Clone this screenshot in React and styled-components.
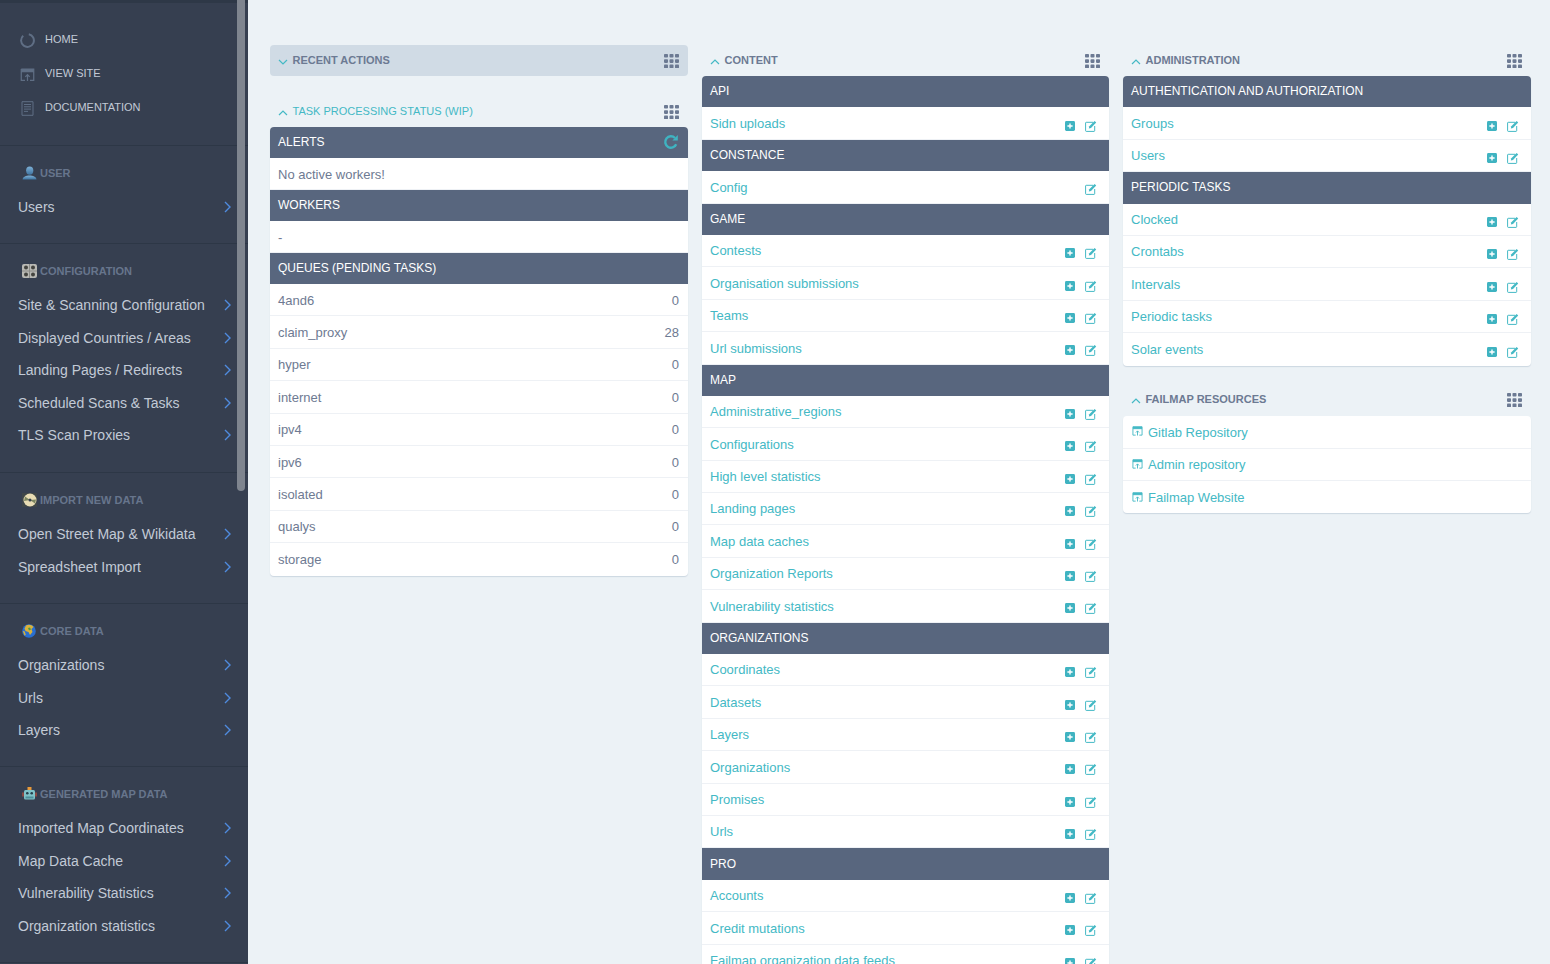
import React from "react";
import styled, { createGlobalStyle } from "styled-components";

const Global = createGlobalStyle`
  html, body { margin: 0; height: 100%; overflow: hidden; background: #ecf2f6; }
  body { font-family: "Liberation Sans", Arial, sans-serif; -webkit-font-smoothing: antialiased; }
  * { box-sizing: border-box; }
`;

const Page = styled.div`
  display: flex;
  height: 964px;
  overflow: hidden;
  background: #ecf2f6;
`;
const Sidebar = styled.aside`
  position: relative;
  flex: 0 0 248px;
  padding-top: 3px;
  background: #363f50;
  box-shadow: inset 0 3px 0 #2e3847;
  overflow: hidden;
`;
const ScrollThumb = styled.div`
  position: absolute;
  top: 0;
  left: 237px;
  width: 8px;
  height: 491px;
  border-radius: 0 0 4px 4px;
  background: #7f858f;
`;
const TopLinks = styled.nav`
  display: flex;
  flex-direction: column;
  padding: 19px 0 0 20px;
  height: 143px;
  border-bottom: 1px solid #2d3746;
`;
const TopLink = styled.a`
  display: flex;
  align-items: center;
  height: 34.2px;
  gap: 10px;
  font-size: 11px;
  color: #c2cad6;
  svg { flex: 0 0 15px; margin-top: 3px; }
`;
const SideSection = styled.section`
  height: ${p => p.$h}px;
  padding: 17px 0 0 0;
  border-bottom: 1px solid #2d3746;
`;
const SideLabel = styled.div`
  display: flex;
  align-items: center;
  height: 20px;
  padding-left: 22px;
  margin-bottom: 8.2px;
  gap: 3px;
  font-size: 11px;
  font-weight: 700;
  color: #67758c;
`;
const SideItem = styled.a`
  display: flex;
  align-items: center;
  justify-content: space-between;
  height: 32.4px;
  padding: 0 17px 0 18px;
  font-size: 14px;
  color: #c2cad6;
`;
const Main = styled.main`
  flex: 1;
  display: grid;
  grid-template-columns: 418px 407px 408px;
  gap: 14px;
  padding: 45px 19px 0 22px;
  align-items: start;
`;
const Column = styled.div`
  display: flex;
  flex-direction: column;
  gap: ${p => p.$gap ?? 20}px;
  min-width: 0;
`;
const Module = styled.section``;
const ModuleHead = styled.div`
  display: flex;
  align-items: center;
  height: ${p => p.$raised ? 33 : 31}px;
  padding: 0 9.5px 0 8px;
  gap: 4.5px;
  border-radius: 4px;
  background: ${p => p.$collapsed ? "#d0dbe5" : "transparent"};
  font-size: 11px;
  font-weight: ${p => p.$accent ? 400 : 700};
  color: ${p => p.$accent ? "#44b9c5" : "#6c7a93"};
`;
const HeadTitle = styled.span`
  flex: 1;
  margin-top: -1px;
`;
const Card = styled.div`
  background: #fff;
  border-radius: 4px;
  overflow: hidden;
  box-shadow: 0 1px 1px #ccd7e1;
`;
const GroupHead = styled.div`
  display: flex;
  align-items: center;
  justify-content: space-between;
  height: ${p => p.$compact ? 31 : 31.4}px;
  padding: 0 9.5px 1px 8px;
  background: #58667e;
  color: #fff;
  font-size: 12px;
`;
const Row = styled.div`
  display: flex;
  align-items: center;
  justify-content: space-between;
  height: ${p => p.$h ?? 32.4}px;
  padding: 0 ${p => p.$value ? 9 : 12}px 0 8px;
  border-bottom: 1px solid #eef1f5;
  font-size: 13px;
  color: ${p => p.$muted ? "#6e7a92" : "#44b9c5"};
  &:last-child { border-bottom: none; }
`;
const RowText = styled.span`
  display: flex;
  align-items: center;
  gap: 5px;
  margin-top: ${p => p.$lift ? 0.4 : 1}px;
  white-space: nowrap;
`;
const LinkIcon = styled.span`
  display: flex;
  margin: -2px 0 0 1px;
`;
const Actions = styled.span`
  display: flex;
  align-items: center;
  justify-content: flex-end;
  gap: 10px;
  margin-top: 5px;
`;

const Chevron = () => (
  <svg width="7" height="12" viewBox="0 0 7 12" fill="none" stroke="#4f8bdf" strokeWidth="1.4">
    <path d="M1 1l5 5-5 5" />
  </svg>
);
const Fold = ({ down }) => (
  <svg width="10" height="6" viewBox="0 0 10 6" fill="none" stroke="#44b9c5" strokeWidth="1.2" style={{ marginTop: 2, flex: "0 0 10px" }}>
    <path d={down ? "M1 1l4 4 4-4" : "M1 5l4-4 4 4"} />
  </svg>
);
const Dots = () => (
  <svg width="15" height="14" viewBox="0 0 15 14" fill="#6c7a93">
    {[0, 5.3, 10.6].flatMap(y => [0, 5.5, 11].map(x => <rect key={`${x}-${y}`} x={x} y={y} width="4" height="3.6" rx=".8" />))}
  </svg>
);
const Refresh = () => (
  <svg width="16" height="16" viewBox="0 0 16 16" fill="none" stroke="#3fb3c1" strokeWidth="2.4">
    <path d="M13.2 10.2A5.700 5.700 0 1 1 12 4" />
    <path d="M14.800 1v5.400H9.400z" fill="#3fb3c1" stroke="none" />
  </svg>
);
const AddIcon = () => (
  <svg width="10" height="10" viewBox="0 0 10 10">
    <rect width="10" height="10" rx="1.4" fill="#3fb3c1" />
    <path d="M5 2.4v5.2M2.4 5h5.2" stroke="#fff" strokeWidth="1.4" />
  </svg>
);
const EditIcon = () => (
  <svg width="12" height="12" viewBox="0 0 12 12" fill="none">
    <path d="M8 2.300H1.200a.6.6 0 0 0-.6.6v7.900c0 .3.3.6.6.6h7.900c.3 0 .6-.3.6-.6V6" stroke="#44b9c5" strokeWidth="1" />
    <path d="M3.800 8.400l.5-2.200L9.600 1l1.600 1.600-5.200 5.300z" fill="#44b9c5" />
  </svg>
);
const WindowIcon = ({ size = 11, color = "#44b9c5" }) => (
  <svg width={size} height={size * 0.9} viewBox="0 0 14 13" fill="none">
    <path d="M1 3.500h12M1 1h12v11H9.400M4.600 12H1V1" stroke={color} strokeWidth="1.2" />
    <rect x="1" y="1" width="12" height="2.600" fill={color} />
    <path d="M7 12.500V6.600M4.900 8.600L7 6.400l2.100 2.200" stroke={color} strokeWidth="1.2" />
  </svg>
);
const HomeIcon = () => (
  <svg width="15" height="15" viewBox="0 0 15 15" fill="none" stroke="#5f6e84" strokeWidth="2">
    <path d="M8.800 1.200a6.400 6.400 0 1 1-5.600 1.500" />
  </svg>
);
const DocIcon = () => (
  <svg width="15" height="15" viewBox="0 0 15 15" fill="none" stroke="#5f6e84" strokeWidth="1">
    <path d="M2 .7h11v13.600H2zM4 3.500h7M4 5.800h7M4 8.100h7M4 10.400h4" />
  </svg>
);
const UserEmoji = () => (
  <svg width="15" height="14" viewBox="0 0 15 14">
    <defs>
      <linearGradient id="ug" x1="0" y1="0" x2="0" y2="1"><stop offset="0" stopColor="#7fb2d8" /><stop offset="1" stopColor="#3d729f" /></linearGradient>
    </defs>
    <ellipse cx="7.700" cy="4.600" rx="3.600" ry="4.200" fill="url(#ug)" />
    <path d="M.5 13.500c.6-3 3.500-4 7-4s6.500 1 7 4z" fill="url(#ug)" />
  </svg>
);
const GridEmoji = () => (
  <svg width="15" height="14" viewBox="0 0 15 14">
    <rect width="15" height="14" rx="2" fill="#b9b9b4" />
    <path d="M7.500 0v14M0 7h15" stroke="#8c8c88" />
    {[[4, 3.500], [11, 3.500], [4, 10.500], [11, 10.500]].map(([x, y]) => <circle key={`${x}${y}`} cx={x} cy={y} r="2" fill="#44443f" />)}
  </svg>
);
const DiscEmoji = () => (
  <svg width="15" height="14" viewBox="0 0 15 14">
    <rect width="15" height="14" fill="#3f4648" />
    <circle cx="8" cy="7" r="6.500" fill="#e8dcb4" />
    <path d="M8 7L3 3.500 2 8zM8 7l5 3.500 1-4z" fill="#7c8560" />
    <circle cx="8" cy="7" r="1.500" fill="#34404e" />
  </svg>
);
const GlobeEmoji = () => (
  <svg width="15" height="14" viewBox="0 0 15 14">
    <circle cx="7" cy="7" r="6.800" fill="#2a6fd0" />
    <path d="M4 1.500c3-1.300 6-.5 7.500 1.500l-2 2 1 3-2.500 3-1.500-3-3-1-1-2.500zM.8 7l2 .5 1 3.500-1.300.5z" fill="#d9b13a" />
    <path d="M6 4l2-.5 1 2-2 1z" fill="#4a9a48" />
  </svg>
);
const RobotEmoji = () => (
  <svg width="15" height="14" viewBox="0 0 15 14">
    <rect x="5.500" y="0" width="4" height="3" fill="#e89a3a" />
    <rect x="2" y="3" width="11" height="9.500" rx="1.500" fill="#7fc3c9" />
    <rect x="0" y="5.500" width="2" height="4" fill="#8c4a44" />
    <rect x="13" y="5.500" width="2" height="4" fill="#8c4a44" />
    <circle cx="5.300" cy="6.300" r="1.300" fill="#25404c" />
    <circle cx="9.700" cy="6.300" r="1.300" fill="#25404c" />
    <rect x="3.500" y="9.500" width="8" height="2" fill="#4f8f9a" />
  </svg>
);

const sideSections = [
  { label: "USER", icon: <UserEmoji />, h: 98, items: ["Users"] },
  { label: "CONFIGURATION", icon: <GridEmoji />, h: 229, items: ["Site & Scanning Configuration", "Displayed Countries / Areas", "Landing Pages / Redirects", "Scheduled Scans & Tasks", "TLS Scan Proxies"] },
  { label: "IMPORT NEW DATA", icon: <DiscEmoji />, h: 131, items: ["Open Street Map & Wikidata", "Spreadsheet Import"] },
  { label: "CORE DATA", icon: <GlobeEmoji />, h: 163, items: ["Organizations", "Urls", "Layers"] },
  { label: "GENERATED MAP DATA", icon: <RobotEmoji />, h: 196, items: ["Imported Map Coordinates", "Map Data Cache", "Vulnerability Statistics", "Organization statistics"] },
];

const content = [
  ["API", [["Sidn uploads", true]]],
  ["CONSTANCE", [["Config", false]]],
  ["GAME", ["Contests", "Organisation submissions", "Teams", "Url submissions"]],
  ["MAP", ["Administrative_regions", "Configurations", "High level statistics", "Landing pages", "Map data caches", "Organization Reports", "Vulnerability statistics"]],
  ["ORGANIZATIONS", ["Coordinates", "Datasets", "Layers", "Organizations", "Promises", "Urls"]],
  ["PRO", ["Accounts", "Credit mutations", "Failmap organization data feeds"]],
];
const admin = [
  ["AUTHENTICATION AND AUTHORIZATION", ["Groups", "Users"]],
  ["PERIODIC TASKS", ["Clocked", "Crontabs", "Intervals", "Periodic tasks", "Solar events"]],
];
const queues = [["4and6", 0], ["claim_proxy", 28], ["hyper", 0], ["internet", 0], ["ipv4", 0], ["ipv6", 0], ["isolated", 0], ["qualys", 0], ["storage", 0]];
const resources = ["Gitlab Repository", "Admin repository", "Failmap Website"];

const Head = ({ title, collapsed, accent, raised }) => (
  <ModuleHead $collapsed={collapsed} $accent={accent} $raised={raised}>
    <Fold down={collapsed} />
    <HeadTitle>{title}</HeadTitle>
    <Dots />
  </ModuleHead>
);

const Groups = ({ groups }) => (
  <Card>
    {groups.map(([name, rows]) => (
      <React.Fragment key={name}>
        <GroupHead>{name}</GroupHead>
        {rows.map(r => {
          const label = Array.isArray(r) ? r[0] : r;
          const canAdd = Array.isArray(r) ? r[1] : true;
          return (
            <Row key={label}>
              <RowText $lift>{label}</RowText>
              <Actions>
                {canAdd && <AddIcon />}
                <EditIcon />
              </Actions>
            </Row>
          );
        })}
      </React.Fragment>
    ))}
  </Card>
);

export default function App() {
  return (
    <Page>
      <Global />
      <Sidebar>
        <TopLinks>
          <TopLink><HomeIcon />HOME</TopLink>
          <TopLink><WindowIcon size={15} color="#5f6e84" />VIEW SITE</TopLink>
          <TopLink><DocIcon />DOCUMENTATION</TopLink>
        </TopLinks>
        {sideSections.map(s => (
          <SideSection key={s.label} $h={s.h}>
            <SideLabel>{s.icon}{s.label}</SideLabel>
            {s.items.map(i => <SideItem key={i}>{i}<Chevron /></SideItem>)}
          </SideSection>
        ))}
        <ScrollThumb />
      </Sidebar>
      <Main>
        <Column>
          <Module><Head title="RECENT ACTIONS" collapsed /></Module>
          <Module>
            <Head title="TASK PROCESSING STATUS (WIP)" accent />
            <Card>
              <GroupHead $compact>ALERTS<Refresh /></GroupHead>
              <Row $muted $value $h={32}><RowText>No active workers!</RowText></Row>
              <GroupHead $compact>WORKERS</GroupHead>
              <Row $muted $value $h={32}><RowText>-</RowText></Row>
              <GroupHead $compact>QUEUES (PENDING TASKS)</GroupHead>
              {queues.map(([q, n]) => (
                <Row key={q} $muted $value><RowText>{q}</RowText><RowText>{n}</RowText></Row>
              ))}
            </Card>
          </Module>
        </Column>
        <Column>
          <Module>
            <Head title="CONTENT" />
            <Groups groups={content} />
          </Module>
        </Column>
        <Column $gap={17.6}>
          <Module>
            <Head title="ADMINISTRATION" />
            <Groups groups={admin} />
          </Module>
          <Module>
            <Head title="FAILMAP RESOURCES" raised />
            <Card>
              {resources.map(r => (
                <Row key={r}><RowText><LinkIcon><WindowIcon /></LinkIcon>{r}</RowText></Row>
              ))}
            </Card>
          </Module>
        </Column>
      </Main>
    </Page>
  );
}
